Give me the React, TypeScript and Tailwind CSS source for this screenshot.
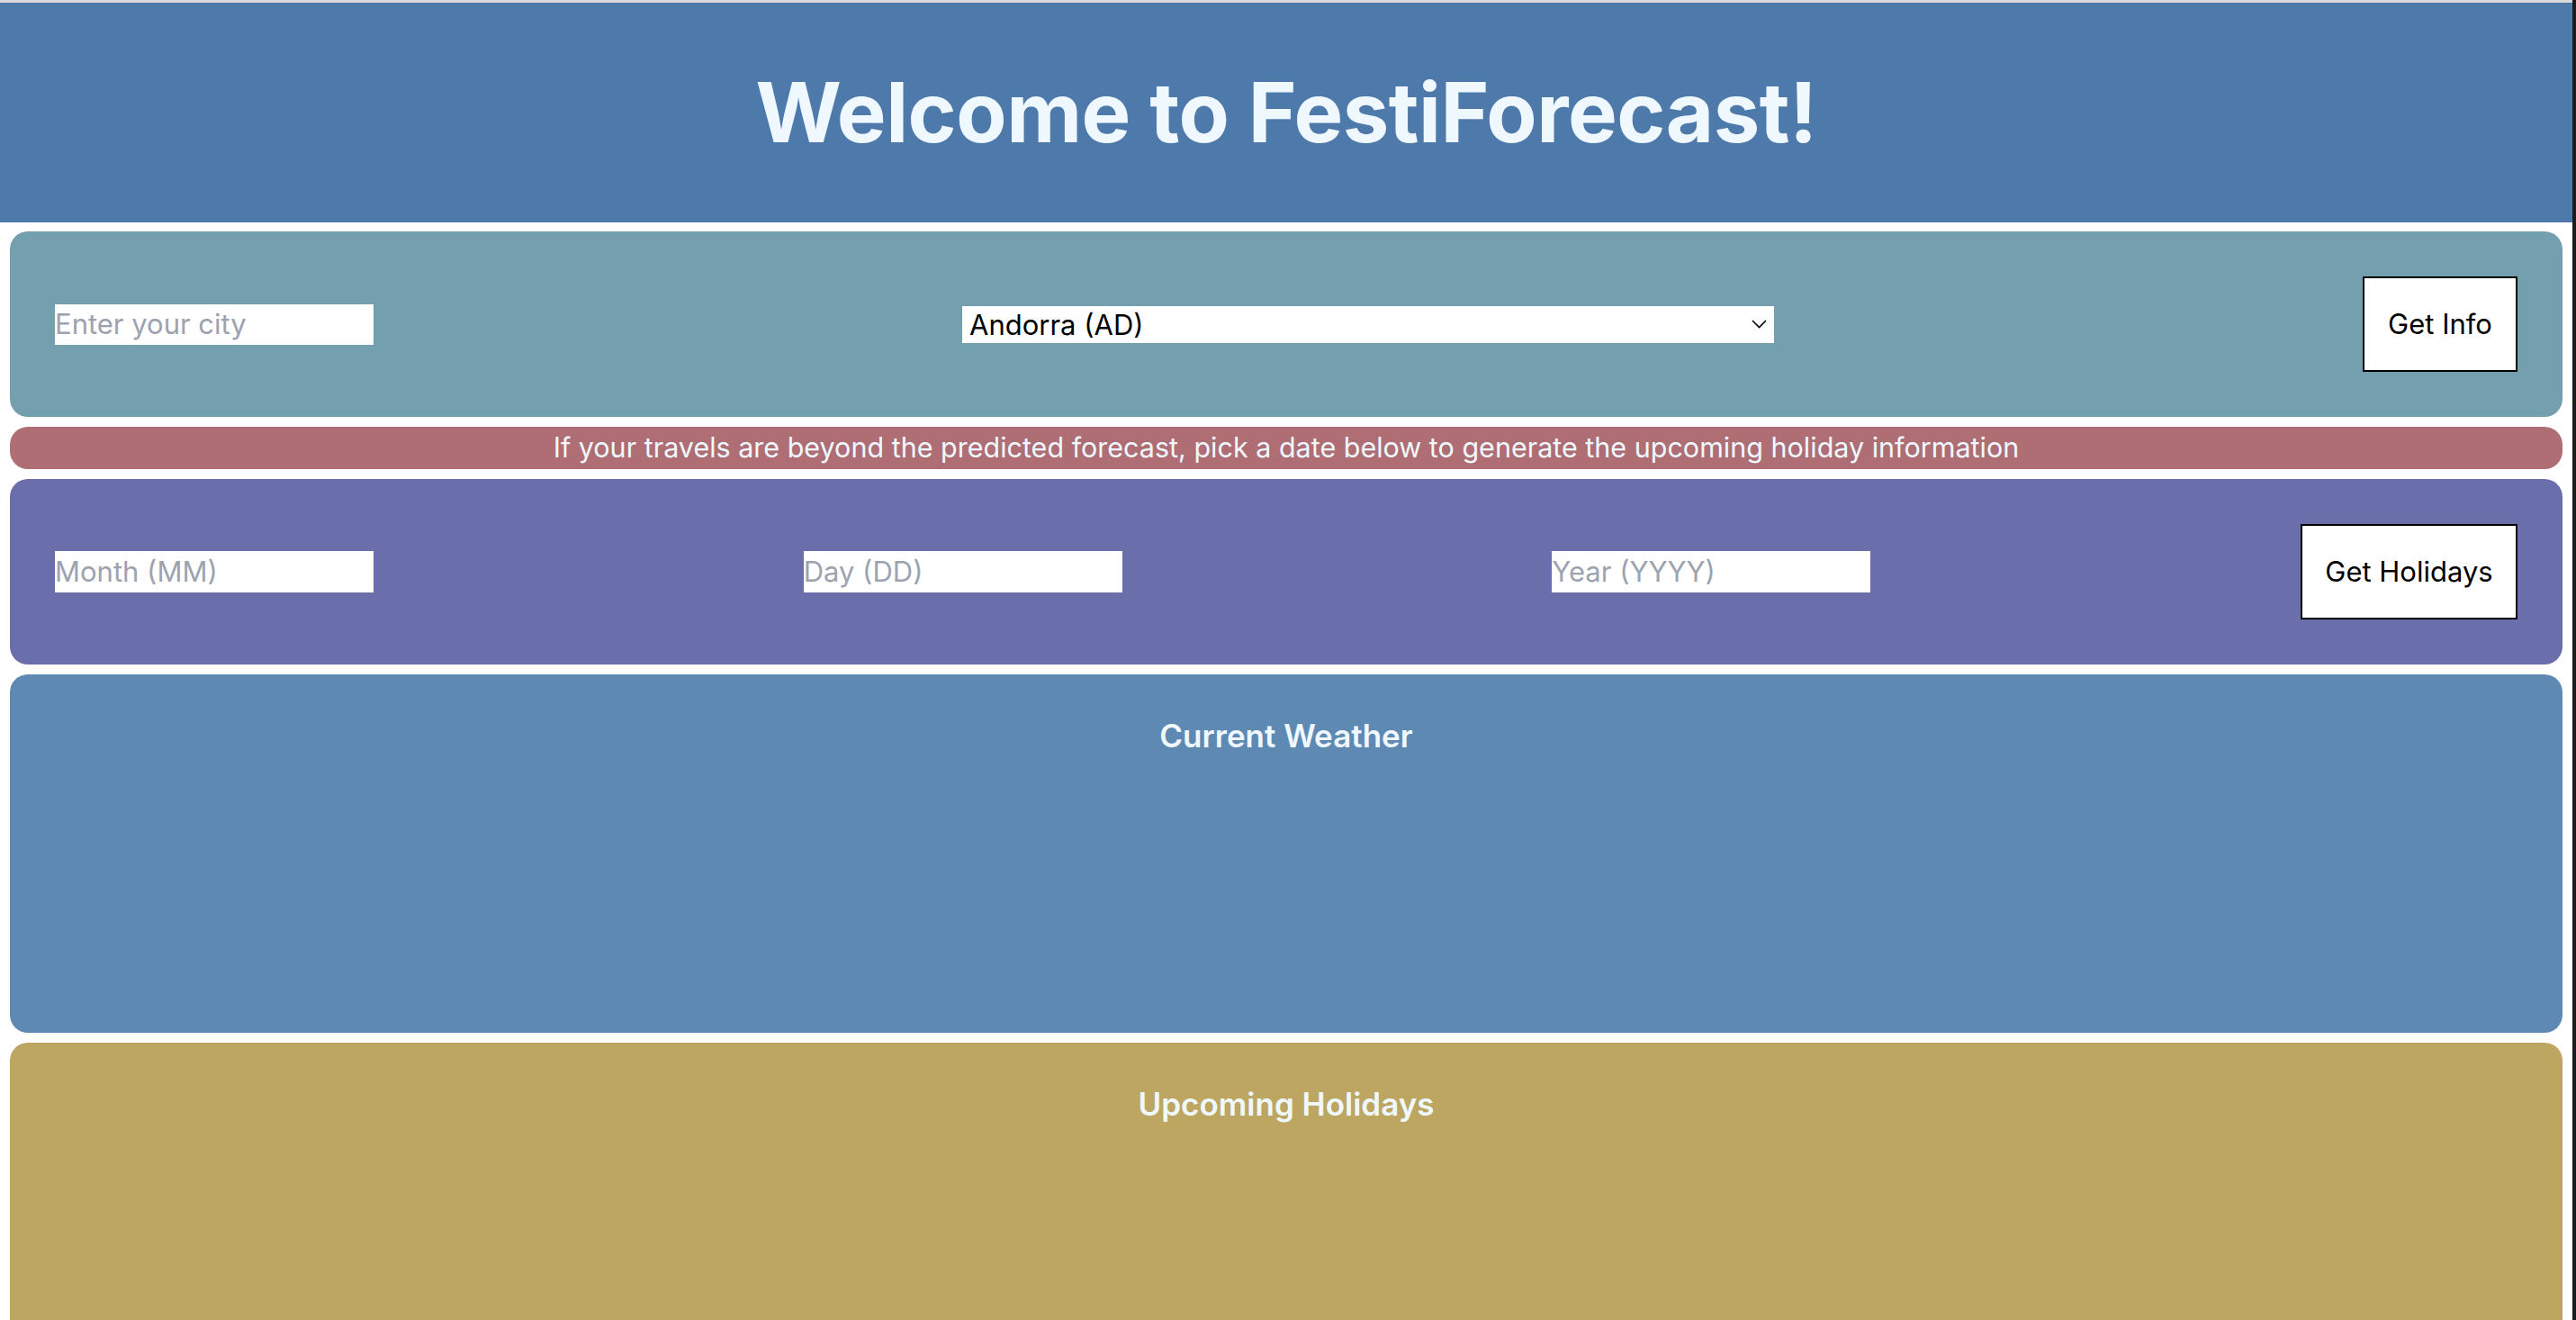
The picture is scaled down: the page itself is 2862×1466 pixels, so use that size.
import React, { useState } from 'react';

const countries = ['Andorra (AD)', 'Argentina (AR)', 'Australia (AU)', 'Austria (AT)', 'Belgium (BE)'];

const App: React.FC = () => {
  const [country, setCountry] = useState(countries[0]);

  return (
    <div className="flex min-h-screen bg-white font-['Inter',sans-serif]">
      <div className="flex flex-1 flex-col">
        <div className="h-[3px] bg-[#d9d9d9]"></div>

        {/* Header */}
        <header className="flex h-[244px] items-center justify-center bg-[#4e79ab]">
          <h1 className="text-[92px] font-bold leading-none tracking-[-0.5px] text-[#f0f8ff]">
            Welcome to FestiForecast!
          </h1>
        </header>

        <div className="flex flex-col gap-[11px] px-[11px] pt-[10px]">
          {/* City + country */}
          <div className="flex items-center justify-between rounded-[20px] bg-[#749fae] p-[50px]">
            <input
              type="text"
              placeholder="Enter your city"
              className="h-[45px] w-[354px] bg-white text-[31px] text-black outline-none placeholder:text-[#9ca3af]"
            />
            <div className="relative h-[41px] w-[902px] bg-white">
              <select
                value={country}
                onChange={(e) => setCountry(e.target.value)}
                className="h-full w-full appearance-none bg-white pl-[8px] text-[31px] leading-[41px] text-black outline-none"
              >
                {countries.map((c) => (
                  <option key={c} value={c}>
                    {c}
                  </option>
                ))}
              </select>
              <svg
                className="pointer-events-none absolute right-[8px] top-[15px]"
                width="17"
                height="10"
                viewBox="0 0 17 10"
                fill="none"
              >
                <polyline points="1,1 8.5,8.5 16,1" stroke="#000" strokeWidth="1.6" />
              </svg>
            </div>
            <button className="flex h-[106px] w-[172px] items-center justify-center border-2 border-black bg-white text-[31px] text-black">
              Get Info
            </button>
          </div>

          {/* Notice banner */}
          <div className="flex h-[47px] items-center justify-center rounded-[20px] bg-[#ae6e74]">
            <p className="text-[30.5px] leading-none text-[#f0f8ff]">
              If your travels are beyond the predicted forecast, pick a date below to generate the upcoming holiday information
            </p>
          </div>

          {/* Date pickers */}
          <div className="flex items-center justify-between rounded-[20px] bg-[#6a6fab] p-[50px]">
            <input
              type="text"
              placeholder="Month (MM)"
              className="h-[46px] w-[354px] bg-white text-[31px] text-black outline-none placeholder:text-[#9ca3af]"
            />
            <input
              type="text"
              placeholder="Day (DD)"
              className="h-[46px] w-[354px] bg-white text-[31px] text-black outline-none placeholder:text-[#9ca3af]"
            />
            <input
              type="text"
              placeholder="Year (YYYY)"
              className="h-[46px] w-[354px] bg-white text-[31px] text-black outline-none placeholder:text-[#9ca3af]"
            />
            <button className="flex h-[106px] w-[241px] items-center justify-center border-2 border-black bg-white text-[31px] text-black">
              Get Holidays
            </button>
          </div>

          {/* Weather */}
          <section className="h-[398px] rounded-[20px] bg-[#5d89b3] pt-[41px]">
            <h2 className="text-center text-[35px] font-semibold leading-[54px] text-[#f0f8ff]">Current Weather</h2>
          </section>

          {/* Holidays */}
          <section className="h-[398px] rounded-[20px] bg-[#bda661] pt-[41px]">
            <h2 className="text-center text-[35px] font-semibold leading-[54px] text-[#f0f8ff]">Upcoming Holidays</h2>
          </section>
        </div>
      </div>
      <div className="w-[4px] bg-[#1c1c1c]"></div>
    </div>
  );
};

export default App;
